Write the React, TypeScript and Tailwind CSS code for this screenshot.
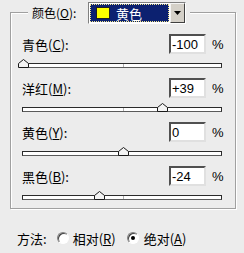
const rows = [
    {label: "青色", key: "C", value: -100},
    {label: "洋红", key: "M", value: 39},
    {label: "黄色", key: "Y", value: 0},
    {label: "黑色", key: "B", value: -24},
]

function fmt(v: number) {
    return v > 0 ? `+${v}` : `${v}`
}

function Slider({value}: { value: number }) {
    return (
        <div className="relative mt-[9px] h-[5px] w-[200px] border border-[#2b2b2b] border-b-[#5a5a5a] bg-white">
            <div className="absolute left-[100px] top-0 h-[3px] w-px bg-[#b0b0b0]"></div>
            <svg width="11" height="9" viewBox="0 0 11 9" className="absolute top-[-5px]" style={{left: 95 + value}}>
                <polygon points="5.5,0.5 10.5,4.5 10.5,8.5 0.5,8.5 0.5,4.5" fill="#f4f4f4" stroke="#1a1a1a" strokeWidth="1"/>
            </svg>
        </div>
    )
}

function Radio({checked}: { checked?: boolean }) {
    return (
        <span className="relative inline-block h-[12px] w-[12px] rounded-full border border-t-[#808080] border-l-[#808080] border-b-white border-r-white bg-white shadow-[inset_1px_1px_0_#404040]">
            {checked && <span className="absolute left-[3px] top-[3px] h-[4px] w-[4px] rounded-full bg-black"></span>}
        </span>
    )
}

export default function App() {
    return (
        <div className="w-[244px] h-[253px] bg-[#ececec] text-[12px] leading-none text-black font-['Noto_Sans_CJK_SC',sans-serif] overflow-hidden">
            <fieldset className="ml-[10px] w-[226px] border border-[#a0a0a0] pl-[11px] pr-[13px] pb-[8px] shadow-[inset_1px_1px_0_#fff,1px_1px_0_#fff]">
                <legend className="ml-[6px] px-1 bg-[#ececec]">
                    <div className="flex items-center pt-[2px]">
                        <span className="w-[56px]">颜色(<u>O</u>):</span>
                        <div className="flex h-[22px] w-[98px] border border-t-[#808080] border-l-[#808080] border-b-white border-r-white bg-white">
                            <div className="m-px flex flex-1 items-center bg-[#0c2170] outline outline-1 outline-dotted outline-[#f0e68c] -outline-offset-1 pl-[6px]">
                                <span className="h-[12px] w-[14px] border border-[#202020] bg-[#ffff00]"></span>
                                <span className="ml-[6px] text-white text-[13px]">黄色</span>
                            </div>
                            <div className="flex w-[15px] items-center justify-center bg-[#d4d0c8] border border-t-[#f4f4f4] border-l-[#f4f4f4] border-b-[#404040] border-r-[#404040]">
                                <svg width="7" height="4" viewBox="0 0 7 4"><polygon points="0,0 7,0 3.5,4" fill="#000"/></svg>
                            </div>
                        </div>
                    </div>
                </legend>
                <div className="mt-[10px] flex flex-col gap-[10px]">
                    {rows.map((r) => (
                        <div key={r.key}>
                            <div className="flex h-[20px] items-center justify-between">
                                <span className="text-[13px]">{r.label}(<u>{r.key}</u>):</span>
                                <div className="flex items-center">
                                    <div className="flex h-[20px] w-[37px] items-center border-2 border-t-[#505050] border-l-[#505050] border-b-[#e0e0e0] border-r-[#e0e0e0] bg-white pl-px font-['Liberation_Sans',sans-serif] text-[13px]">
                                        {fmt(r.value)}
                                    </div>
                                    <span className="ml-[6px] w-[10px] font-['Liberation_Sans',sans-serif] text-[13px]">%</span>
                                </div>
                            </div>
                            <Slider value={r.value}/>
                        </div>
                    ))}
                </div>
            </fieldset>
            <div className="mt-[21px] flex h-[16px] items-center pl-[17px] text-[13px]">
                <span>方法:</span>
                <span className="ml-[10px] flex items-center"><Radio/></span>
                <span className="ml-[4px]">相对(<u>R</u>)</span>
                <span className="ml-[11px] flex items-center"><Radio checked/></span>
                <span className="ml-[5px]">绝对(<u>A</u>)</span>
            </div>
        </div>
    )
}
